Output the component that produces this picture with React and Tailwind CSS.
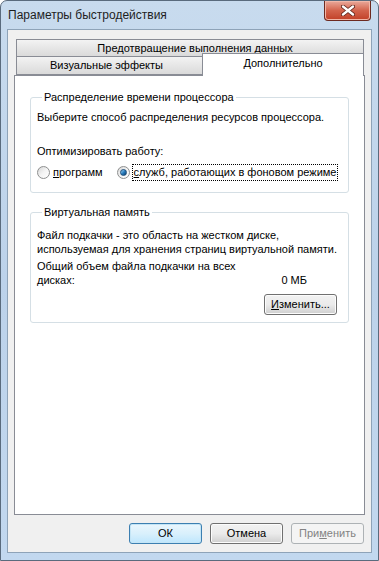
function Radio({ checked }) {
  return (
    <span className="relative inline-flex h-[13px] w-[13px] shrink-0 items-center justify-center rounded-full border border-[#8e8f8f] bg-gradient-to-br from-[#d6d6d6] via-[#f4f4f4] to-[#ffffff]">
      {checked && (
        <span className="h-[7px] w-[7px] rounded-full border border-[#1b4d7a] bg-gradient-to-br from-[#9fd6f5] via-[#2a7fc0] to-[#0d3f6d]" />
      )}
    </span>
  );
}

function Group({ title, className, children }) {
  return (
    <fieldset className={`min-w-0 rounded-[3px] border border-[#d5dfe5] ${className}`}>
      <legend className="ml-[5px] px-[2px] leading-[15px]">{title}</legend>
      {children}
    </fieldset>
  );
}

function Btn({ children, kind }) {
  const styles = {
    ok: "border-[#3c7fb1] bg-gradient-to-b from-[#eaf6fd] via-[#d9f0fc] to-[#bee6fd] shadow-[inset_0_0_0_1px_#c4e5f6]",
    normal: "border-[#707070] bg-gradient-to-b from-[#f2f2f2] via-[#ebebeb] to-[#cfcfcf] shadow-[inset_0_0_0_1px_#fcfcfc]",
    disabled: "border-[#adb2b5] bg-[#f4f4f4] text-[#838383]",
  };
  return (
    <div className={`flex h-[21px] w-[73px] items-center justify-center rounded-[3px] border ${styles[kind]}`}>
      {children}
    </div>
  );
}

export default function App() {
  return (
    <div
      className="flex h-[561px] w-[379px] flex-col whitespace-nowrap rounded-t-[7px] border border-[#5a6b7d] bg-gradient-to-b from-[#c8dbee] via-[#bcd2ea] to-[#c2d8ef] text-[11px] text-black"
      style={{ fontFamily: '"Liberation Sans", Arial, sans-serif' }}
    >
      <div className="flex h-[28px] shrink-0 items-start">
        <div className="pl-[7px] pt-[7px] text-[12px] leading-[15px] text-[#1e1e1e]">Параметры быстродействия</div>
        <div className="ml-auto mr-[7px] flex h-[20px] w-[47px] items-center justify-center rounded-b-[4px] border border-t-0 border-[#6d2a20] bg-gradient-to-b from-[#e9a99b] via-[#d3634c] to-[#c13f26] shadow-[inset_0_0_0_1px_#f1b7a8]">
          <svg width="14" height="11" viewBox="0 0 14 11">
            <path d="M2 1.5 L12 9.5 M12 1.5 L2 9.5" stroke="#5b2218" strokeWidth="4" strokeLinecap="round" />
            <path d="M2 1.5 L12 9.5 M12 1.5 L2 9.5" stroke="#ffffff" strokeWidth="2.4" strokeLinecap="round" />
          </svg>
        </div>
      </div>

      <div className="mx-[6px] mb-[7px] flex flex-1 flex-col border border-[#8ea3b8] bg-[#f0f0f0] px-[6px] pt-[9px]">
        <div className="flex flex-col pl-[2px] pr-[1px]">
          <div className="flex h-[18px] items-center justify-center border border-[#898c95] bg-gradient-to-b from-[#f3f3f3] to-[#dadada] pl-[10px] leading-[15px]">
            Предотвращение выполнения данных
          </div>
          <div className="flex">
            <div className="-mt-px flex h-[19px] w-[187px] items-center justify-center border border-[#898c95] bg-gradient-to-b from-[#f3f3f3] to-[#dadada] pr-[6px] leading-[15px]">
              Визуальные эффекты
            </div>
            <div className="relative z-10 -mb-px -ml-px -mt-[4px] flex h-[23px] flex-1 items-start justify-center border border-b-0 border-[#898c95] bg-white pt-[2px] leading-[15px]">
              Дополнительно
            </div>
          </div>
        </div>

        <div className="flex h-[440px] flex-col border border-[#898c95] bg-white px-[15px] pt-[14px]">
          <Group title="Распределение времени процессора" className="h-[103px] pl-[6px]">
            <div className="mt-[5px] leading-[15px]">Выберите способ распределения ресурсов процессора.</div>
            <div className="mt-[19px] leading-[15px]">Оптимизировать работу:</div>
            <div className="mt-[5px] flex items-center">
              <Radio />
              <span className="ml-[3px] leading-[15px]"><span className="underline">п</span>рограмм</span>
              <span className="ml-[14px]"><Radio checked /></span>
              <span className="ml-[2px] border border-dotted border-black px-px leading-[15px]">
                <span className="underline">с</span>лужб, работающих в фоновом режиме
              </span>
            </div>
          </Group>

          <Group title="Виртуальная память" className="mt-[12px] h-[118px] pl-[6px] pr-[11px]">
            <div className="mt-[8px] leading-[14px]">
              Файл подкачки - это область на жестком диске,
              <br />
              используемая для хранения страниц виртуальной памяти.
            </div>
            <div className="mt-[3px] leading-[14px]">Общий объем файла подкачки на всех</div>
            <div className="flex leading-[14px]">
              <span>дисках:</span>
              <span className="ml-auto mr-[30px]">0 МБ</span>
            </div>
            <div className="mt-[7px] flex justify-end">
              <div className="flex h-[21px] w-[73px] items-center justify-center rounded-[3px] border border-[#707070] bg-gradient-to-b from-[#f2f2f2] via-[#ebebeb] to-[#cfcfcf] shadow-[inset_0_0_0_1px_#fcfcfc]">
                <span><span className="underline">И</span>зменить...</span>
              </div>
            </div>
          </Group>
        </div>

        <div className="mt-[8px] flex justify-end gap-[8px] pr-[1px]">
          <Btn kind="ok">ОК</Btn>
          <Btn kind="normal">Отмена</Btn>
          <Btn kind="disabled">
            <span>При<span className="underline">м</span>енить</span>
          </Btn>
        </div>
      </div>
    </div>
  );
}
